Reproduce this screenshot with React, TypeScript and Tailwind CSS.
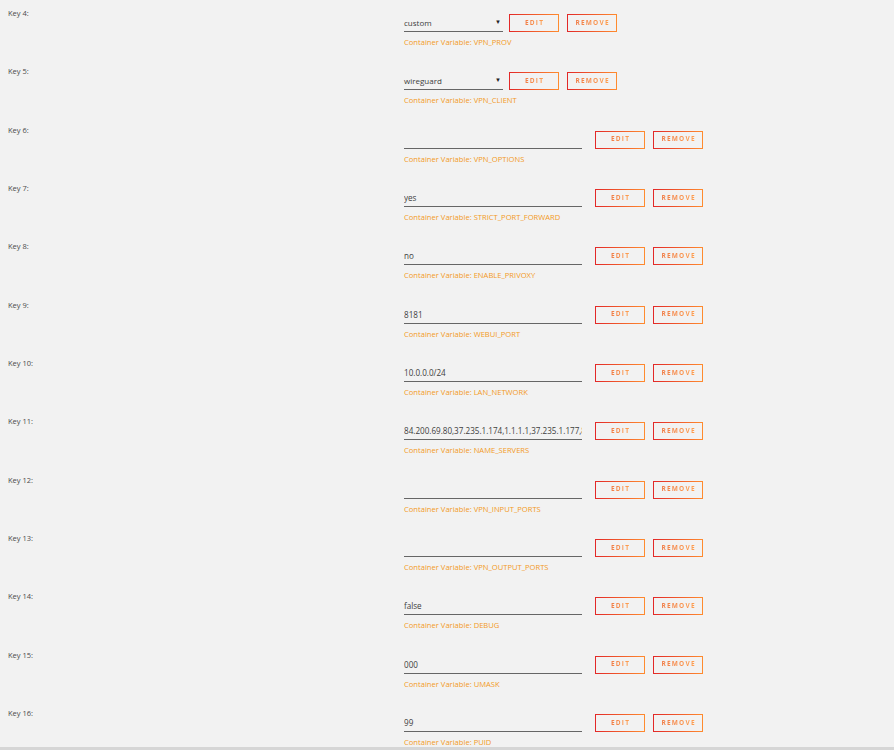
import type { FC } from 'react';

interface VarRow {
  key: number;
  value: string;
  variable: string;
  select?: boolean;
}

const rows: VarRow[] = [
  { key: 4, value: 'custom', variable: 'VPN_PROV', select: true },
  { key: 5, value: 'wireguard', variable: 'VPN_CLIENT', select: true },
  { key: 6, value: '', variable: 'VPN_OPTIONS' },
  { key: 7, value: 'yes', variable: 'STRICT_PORT_FORWARD' },
  { key: 8, value: 'no', variable: 'ENABLE_PRIVOXY' },
  { key: 9, value: '8181', variable: 'WEBUI_PORT' },
  { key: 10, value: '10.0.0.0/24', variable: 'LAN_NETWORK' },
  {
    key: 11,
    value: '84.200.69.80,37.235.1.174,1.1.1.1,37.235.1.177,84.200.70.40,1.0.0.1',
    variable: 'NAME_SERVERS',
  },
  { key: 12, value: '', variable: 'VPN_INPUT_PORTS' },
  { key: 13, value: '', variable: 'VPN_OUTPUT_PORTS' },
  { key: 14, value: 'false', variable: 'DEBUG' },
  { key: 15, value: '000', variable: 'UMASK' },
  { key: 16, value: '99', variable: 'PUID' },
];

const GradientButton: FC<{ label: string }> = ({ label }) => (
  <button
    type="button"
    className="w-[50px] h-[18px] shrink-0 border-[1.5px] border-solid [border-image:linear-gradient(90deg,#e22828,#ff8c2f)_1] bg-transparent flex items-center justify-center"
  >
    <span className="text-[6.5px] leading-none font-bold tracking-[1.2px] pl-[1.2px] bg-gradient-to-r from-[#f07a45] to-[#ffa050] bg-clip-text text-transparent">
      {label}
    </span>
  </button>
);

const VariableRow: FC<{ row: VarRow }> = ({ row }) => (
  <div className="flex h-[58.33px]">
    <div className="w-[404px] shrink-0 pl-2 pt-px text-[7.5px] leading-[14px] text-[#4a4a4a]">
      Key {row.key}:
    </div>
    <div className="pt-[9px]">
      <div className={`flex items-start ${row.select ? 'gap-[6px]' : 'gap-[13px]'}`}>
        {row.select ? (
          <div className="w-[99px] h-[18px] border-b border-[#666] flex items-center justify-between pr-[2px]">
            <span className="text-[8px] text-[#404040]">{row.value}</span>
            <span className="text-[6px] text-[#222]">▼</span>
          </div>
        ) : (
          <input
            readOnly
            value={row.value}
            className="w-[178px] h-[18px] border-0 border-b border-[#666] bg-transparent p-0 text-[8.1px] text-[#404040] outline-none"
          />
        )}
        <div className="flex gap-2">
          <GradientButton label="EDIT" />
          <GradientButton label="REMOVE" />
        </div>
      </div>
      <div className="mt-[5px] text-[7.6px] leading-[11px] text-[#f29a26]">
        Container Variable: {row.variable}
      </div>
    </div>
  </div>
);

const App: FC = () => {
  return (
    <div className="h-[750px] w-full bg-[#f2f2f2] flex flex-col overflow-hidden font-['Open_Sans',sans-serif]">
      <div className="flex-1 overflow-hidden pt-[5px]">
        {rows.map((row) => (
          <VariableRow key={row.key} row={row} />
        ))}
      </div>
      <div className="h-[3px] bg-[#d6d6d6]" />
    </div>
  );
};

export default App;
